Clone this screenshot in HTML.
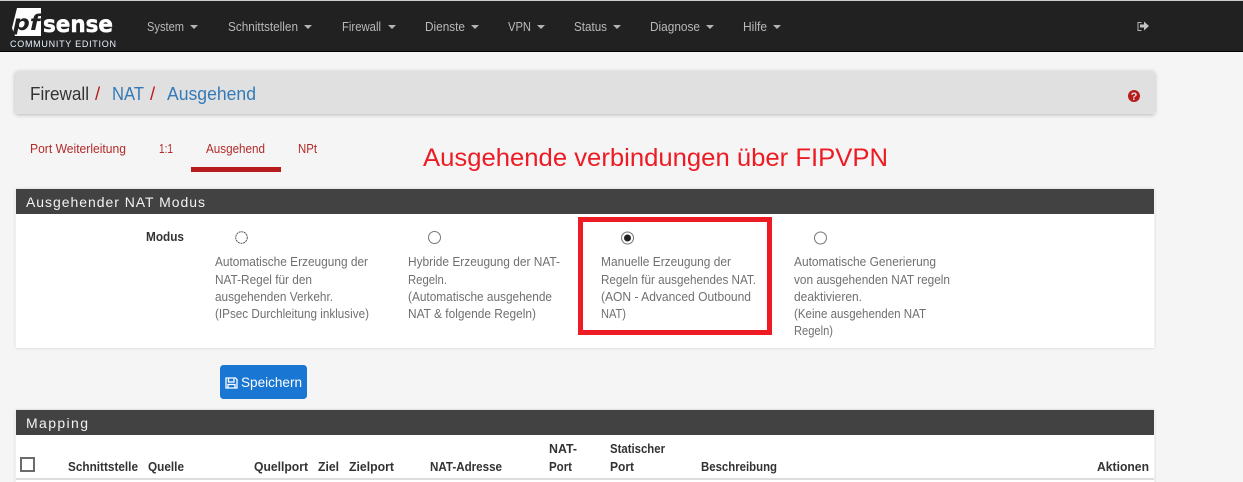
<!DOCTYPE html>
<html lang="de">
<head>
<meta charset="utf-8">
<title>Firewall NAT Ausgehend</title>
<style>
html,body{margin:0;padding:0;width:1243px;height:482px;overflow:hidden;background:#f5f5f5}
svg{display:block;position:absolute;left:0;top:0}
text{font-family:"Liberation Sans",Arial,sans-serif;white-space:pre}
.nav{font-size:12.5px;fill:#b9b9b9}
.tab{font-size:12.500px;fill:#b32a2a}
.h{font-size:14px;fill:#f2f2f2}
.m{font-size:12.500px;fill:#707070}
.b{font-size:12.500px;font-weight:bold;fill:#333}
.bc{font-size:18.500px}
</style>
</head>
<body>
<svg width="1243" height="482" viewBox="0 0 1243 482" xmlns="http://www.w3.org/2000/svg">
<defs>
<filter id="s" x="-2%" y="-20%" width="104%" height="140%"><feDropShadow dx="0" dy="1" stdDeviation="2" flood-color="#000" flood-opacity=".25"/></filter>
<filter id="p" x="-2%" y="-5%" width="104%" height="110%"><feDropShadow dx="0" dy="0" stdDeviation="1" flood-color="#000" flood-opacity=".2"/></filter>
</defs>
<rect width="1243" height="482" fill="#f5f5f5"/>
<!-- navbar -->
<rect width="1243" height="1" fill="#cfcfcf"/>
<rect y="1" width="1243" height="50" fill="#212121"/>
<rect y="51" width="1243" height="1" fill="#000"/>
<!-- logo -->
<path d="M17 8H41V36H15L12 28Z" fill="#fff"/>
<text x="13" y="30" font-size="21" font-weight="bold" font-style="italic" fill="#212121" textLength="27" lengthAdjust="spacingAndGlyphs" style="font-family:'DejaVu Sans',sans-serif">pf</text>
<text x="43" y="32" font-size="23" font-weight="bold" fill="#fff" stroke="#fff" stroke-width=".5" textLength="70" lengthAdjust="spacingAndGlyphs" style="font-family:'DejaVu Sans',sans-serif">sense</text>
<text x="10" y="47" font-size="9" fill="#e8f2ff" textLength="106" lengthAdjust="spacing">COMMUNITY EDITION</text>
<!-- nav items -->
<g class="navs">
<text class="nav" x="147" y="31" textLength="37" lengthAdjust="spacingAndGlyphs">System</text><path d="M190 25h8l-4 4z" fill="#b5b5b5"/>
<text class="nav" x="228" y="31" textLength="70" lengthAdjust="spacingAndGlyphs">Schnittstellen</text><path d="M304 25h8l-4 4z" fill="#b5b5b5"/>
<text class="nav" x="342" y="31" textLength="39" lengthAdjust="spacingAndGlyphs">Firewall</text><path d="M388 25h8l-4 4z" fill="#b5b5b5"/>
<text class="nav" x="425" y="31" textLength="40" lengthAdjust="spacingAndGlyphs">Dienste</text><path d="M471 25h8l-4 4z" fill="#b5b5b5"/>
<text class="nav" x="508" y="31" textLength="23" lengthAdjust="spacingAndGlyphs">VPN</text><path d="M537 25h8l-4 4z" fill="#b5b5b5"/>
<text class="nav" x="574" y="31" textLength="33" lengthAdjust="spacingAndGlyphs">Status</text><path d="M613 25h8l-4 4z" fill="#b5b5b5"/>
<text class="nav" x="650" y="31" textLength="50" lengthAdjust="spacingAndGlyphs">Diagnose</text><path d="M706 25h8l-4 4z" fill="#b5b5b5"/>
<text class="nav" x="743" y="31" textLength="24" lengthAdjust="spacingAndGlyphs">Hilfe</text><path d="M773 25h8l-4 4z" fill="#b5b5b5"/>
</g>
<!-- sign out icon -->
<path d="M1141.500 22.500H1138V30.500H1141.500" fill="none" stroke="#b5b5b5" stroke-width="1"/>
<path d="M1140 24.500H1144V21.500L1149 26L1144 30.500V27.500H1140Z" fill="#c4c4c4"/>
<!-- breadcrumb -->
<rect x="15" y="71" width="1140" height="43" rx="3" fill="#e0e0e0" filter="url(#s)"/>
<text class="bc" x="30" y="100" fill="#333" textLength="59" lengthAdjust="spacingAndGlyphs">Firewall</text>
<text class="bc" x="95" y="100" fill="#b71c1c">/</text>
<text class="bc" x="112" y="100" fill="#337ab7" textLength="32" lengthAdjust="spacingAndGlyphs">NAT</text>
<text class="bc" x="150" y="100" fill="#b71c1c">/</text>
<text class="bc" x="167" y="100" fill="#337ab7" textLength="89" lengthAdjust="spacingAndGlyphs">Ausgehend</text>
<circle cx="1134" cy="96" r="6" fill="#b71c1c"/>
<text x="1134" y="100" font-size="11" font-weight="bold" fill="#e0e0e0" text-anchor="middle">?</text>
<!-- tabs -->
<text class="tab" x="30" y="153" textLength="96" lengthAdjust="spacingAndGlyphs">Port Weiterleitung</text>
<text class="tab" x="159" y="153" textLength="14" lengthAdjust="spacingAndGlyphs">1:1</text>
<text class="tab" x="206" y="153" textLength="59" lengthAdjust="spacingAndGlyphs">Ausgehend</text>
<text class="tab" x="298" y="153" textLength="19" lengthAdjust="spacingAndGlyphs">NPt</text>
<rect x="191" y="167" width="90" height="5" fill="#b71c1c"/>
<!-- annotation -->
<text x="423" y="166" font-size="25" fill="#ed1c24" textLength="465" lengthAdjust="spacingAndGlyphs">Ausgehende verbindungen über FIPVPN</text>
<!-- panel 1 -->
<rect x="15.500" y="189" width="1139" height="159" fill="#fff" filter="url(#p)"/>
<rect x="16" y="189" width="1138" height="25" fill="#424242"/>
<text class="h" x="26" y="207" textLength="179" lengthAdjust="spacing">Ausgehender NAT Modus</text>
<text class="b" x="146" y="241" textLength="38" lengthAdjust="spacingAndGlyphs">Modus</text>
<!-- radios -->
<circle cx="241.500" cy="237.500" r="5.800" fill="#fff" stroke="#555" stroke-width="1" stroke-dasharray="2 .7"/>
<circle cx="434.500" cy="237.500" r="6" fill="#fff" stroke="#767676" stroke-width="1"/>
<circle cx="627.500" cy="238" r="6" fill="#fff" stroke="#767676" stroke-width="1"/>
<circle cx="627.500" cy="238" r="3.500" fill="#222"/>
<circle cx="820.500" cy="238" r="6" fill="#fff" stroke="#767676" stroke-width="1"/>
<!-- column 1 -->
<text class="m" x="215" y="266" textLength="153" lengthAdjust="spacingAndGlyphs">Automatische Erzeugung der</text>
<text class="m" x="215" y="284" textLength="97" lengthAdjust="spacingAndGlyphs">NAT-Regel für den</text>
<text class="m" x="215" y="301" textLength="118" lengthAdjust="spacingAndGlyphs">ausgehenden Verkehr.</text>
<text class="m" x="215" y="318" textLength="154" lengthAdjust="spacingAndGlyphs">(IPsec Durchleitung inklusive)</text>
<!-- column 2 -->
<text class="m" x="408" y="266" textLength="152" lengthAdjust="spacingAndGlyphs">Hybride Erzeugung der NAT-</text>
<text class="m" x="408" y="284" textLength="39" lengthAdjust="spacingAndGlyphs">Regeln.</text>
<text class="m" x="408" y="301" textLength="144" lengthAdjust="spacingAndGlyphs">(Automatische ausgehende</text>
<text class="m" x="408" y="318" textLength="128" lengthAdjust="spacingAndGlyphs">NAT &amp; folgende Regeln)</text>
<!-- column 3 -->
<text class="m" x="601" y="266" textLength="130" lengthAdjust="spacingAndGlyphs">Manuelle Erzeugung der</text>
<text class="m" x="601" y="284" textLength="155" lengthAdjust="spacingAndGlyphs">Regeln für ausgehendes NAT.</text>
<text class="m" x="601" y="301" textLength="150" lengthAdjust="spacingAndGlyphs">(AON - Advanced Outbound</text>
<text class="m" x="601" y="318" textLength="25" lengthAdjust="spacingAndGlyphs">NAT)</text>
<!-- column 4 -->
<text class="m" x="794" y="266" textLength="142" lengthAdjust="spacingAndGlyphs">Automatische Generierung</text>
<text class="m" x="794" y="284" textLength="156" lengthAdjust="spacingAndGlyphs">von ausgehenden NAT regeln</text>
<text class="m" x="794" y="301" textLength="68" lengthAdjust="spacingAndGlyphs">deaktivieren.</text>
<text class="m" x="794" y="318" textLength="132" lengthAdjust="spacingAndGlyphs">(Keine ausgehenden NAT</text>
<text class="m" x="794" y="335" textLength="39" lengthAdjust="spacingAndGlyphs">Regeln)</text>
<!-- red box -->
<rect x="580.500" y="219.500" width="189" height="113" fill="none" stroke="#ed1c24" stroke-width="5"/>
<!-- button -->
<rect x="220" y="365" width="87" height="34" rx="3.500" fill="#1976d2"/>
<path d="M226 378H235.500L237 379.500V388H226Z M228.500 378.800V382H234V378.800 M228 388V384.500H235V388" fill="none" stroke="#fff" stroke-width="1.300"/>
<text x="241" y="387" font-size="14" fill="#fff" textLength="61" lengthAdjust="spacingAndGlyphs">Speichern</text>
<!-- panel 2 -->
<rect x="15.500" y="410" width="1139" height="90" fill="#fff" filter="url(#p)"/>
<rect x="16" y="410" width="1138" height="25" fill="#424242"/>
<text class="h" x="26" y="428" textLength="62" lengthAdjust="spacing">Mapping</text>
<rect x="21" y="458" width="13" height="13" fill="#fff" stroke="#6b6b6b" stroke-width="2"/>
<text class="b" x="68" y="471" textLength="70" lengthAdjust="spacingAndGlyphs">Schnittstelle</text>
<text class="b" x="148" y="471" textLength="36" lengthAdjust="spacingAndGlyphs">Quelle</text>
<text class="b" x="254" y="471" textLength="54" lengthAdjust="spacingAndGlyphs">Quellport</text>
<text class="b" x="318" y="471" textLength="21" lengthAdjust="spacingAndGlyphs">Ziel</text>
<text class="b" x="349" y="471" textLength="45" lengthAdjust="spacingAndGlyphs">Zielport</text>
<text class="b" x="430" y="471" textLength="72" lengthAdjust="spacingAndGlyphs">NAT-Adresse</text>
<text class="b" x="549" y="453" textLength="28" lengthAdjust="spacingAndGlyphs">NAT-</text>
<text class="b" x="549" y="471" textLength="23" lengthAdjust="spacingAndGlyphs">Port</text>
<text class="b" x="610" y="453" textLength="55" lengthAdjust="spacingAndGlyphs">Statischer</text>
<text class="b" x="610" y="471" textLength="24" lengthAdjust="spacingAndGlyphs">Port</text>
<text class="b" x="701" y="471" textLength="76" lengthAdjust="spacingAndGlyphs">Beschreibung</text>
<text class="b" x="1097" y="471" textLength="52" lengthAdjust="spacingAndGlyphs">Aktionen</text>
<rect x="16" y="478" width="1138" height="2" fill="#ddd"/>
</svg>
</body>
</html>
